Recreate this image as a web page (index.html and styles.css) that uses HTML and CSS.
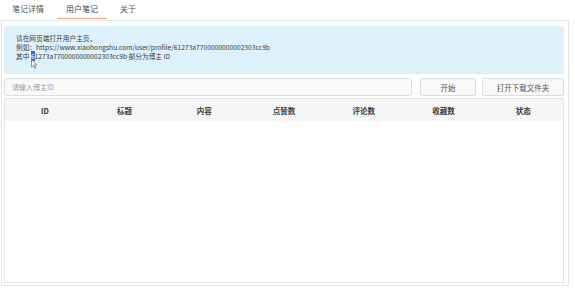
FILE: index.html
```html
<!DOCTYPE html>
<html lang="zh">
<head>
<meta charset="utf-8">
<link rel="stylesheet" href="styles.css">
</head>
<body>
<div class="app">
  <div class="tabs">
    <div class="tab">笔记详情</div>
    <div class="tab active">用户笔记</div>
    <div class="tab">关于</div>
  </div>
  <div class="panel">
    <div class="info">
      <div>请在网页端打开用户主页，</div>
      <div>例如：https://www.xiaohongshu.com/user/profile/61273a7700000000002303cc9b</div>
      <div class="last">其中 <span class="sel">6</span>1273a7700000000002303cc9b 部分为博主 ID
        <svg class="cursor" width="7" height="10" viewBox="0 0 7 10"><path d="M0.5 0.5 L0.5 8 L2.3 6.3 L3.6 9.3 L4.8 8.8 L3.5 5.9 L6 5.9 Z" fill="#fff" stroke="#666" stroke-width="0.7"/></svg>
      </div>
    </div>
    <div class="controls">
      <input class="field" placeholder="请输入博主ID">
      <button class="btn start">开始</button>
      <button class="btn open">打开下载文件夹</button>
    </div>
    <div class="table">
      <div class="thead">
        <div>ID</div><div>标题</div><div>内容</div><div>点赞数</div><div>评论数</div><div>收藏数</div><div>状态</div>
      </div>
      <div class="tbody"></div>
    </div>
  </div>
</div>
</body>
</html>
```
FILE: styles.css
```css
* { box-sizing: border-box; }
html, body { margin: 0; padding: 0; background: #fff; }
body {
  font-family: "Noto Sans CJK SC", "Noto Sans", sans-serif;
  color: #333;
  width: 575px;
  height: 288px;
  overflow: hidden;
}
.app { padding: 0 6px 0 1px; }
.tabs {
  display: flex;
  height: 20px;
  padding-left: 2px;
}
.tab {
  font-size: 8px;
  line-height: 17px;
  padding: 0 9px;
  margin-right: 4px;
  color: #555;
  height: 19px;
}
.tab.active {
  border-bottom: 1.5px solid #e9a27a;
  color: #444;
}
.panel {
  border: 1px solid #e4e4e4;
  height: 266px;
  padding: 5px 4px 2px 2px;
  display: flex;
  flex-direction: column;
}
.info {
  background: #ddf1fb;
  height: 48px;
  border-radius: 2px;
  padding: 8px 12px 0;
  font-size: 6.7px;
  line-height: 9px;
  color: #3a3a3a;
}
.last { position: relative; }
.sel { background: #2a6fd0; color: #fff; }
.cursor { position: absolute; left: 15px; top: 7px; }
.controls {
  display: flex;
  margin-top: 4px;
  height: 18px;
  gap: 6px;
}
.field {
  flex: 1;
  height: 18px;
  border: 1px solid #dedede;
  border-radius: 2px;
  background: #f9f9f9;
  font-family: inherit;
  font-size: 7px;
  padding: 0 7px;
  outline: none;
}
.field::placeholder { color: #999; }
.btn {
  height: 18px;
  border: 1px solid #dcdcdc;
  border-radius: 2px;
  background: #f8f8f8;
  font-family: inherit;
  font-size: 7.5px;
  color: #555;
  padding: 0;
}
.start { width: 56px; margin-left: 2px; }
.open { width: 82px; }
.table {
  margin-top: 2px;
  flex: 1;
  border: 1px solid #e2e2e2;
  display: flex;
  flex-direction: column;
}
.thead {
  display: grid;
  grid-template-columns: repeat(7, 1fr);
  height: 22px;
  background: #f6f6f6;
  font-size: 7.5px;
  font-weight: bold;
  color: #3a3a3a;
  align-items: center;
  text-align: center;
}
.tbody { flex: 1; background: #fff; }
```
